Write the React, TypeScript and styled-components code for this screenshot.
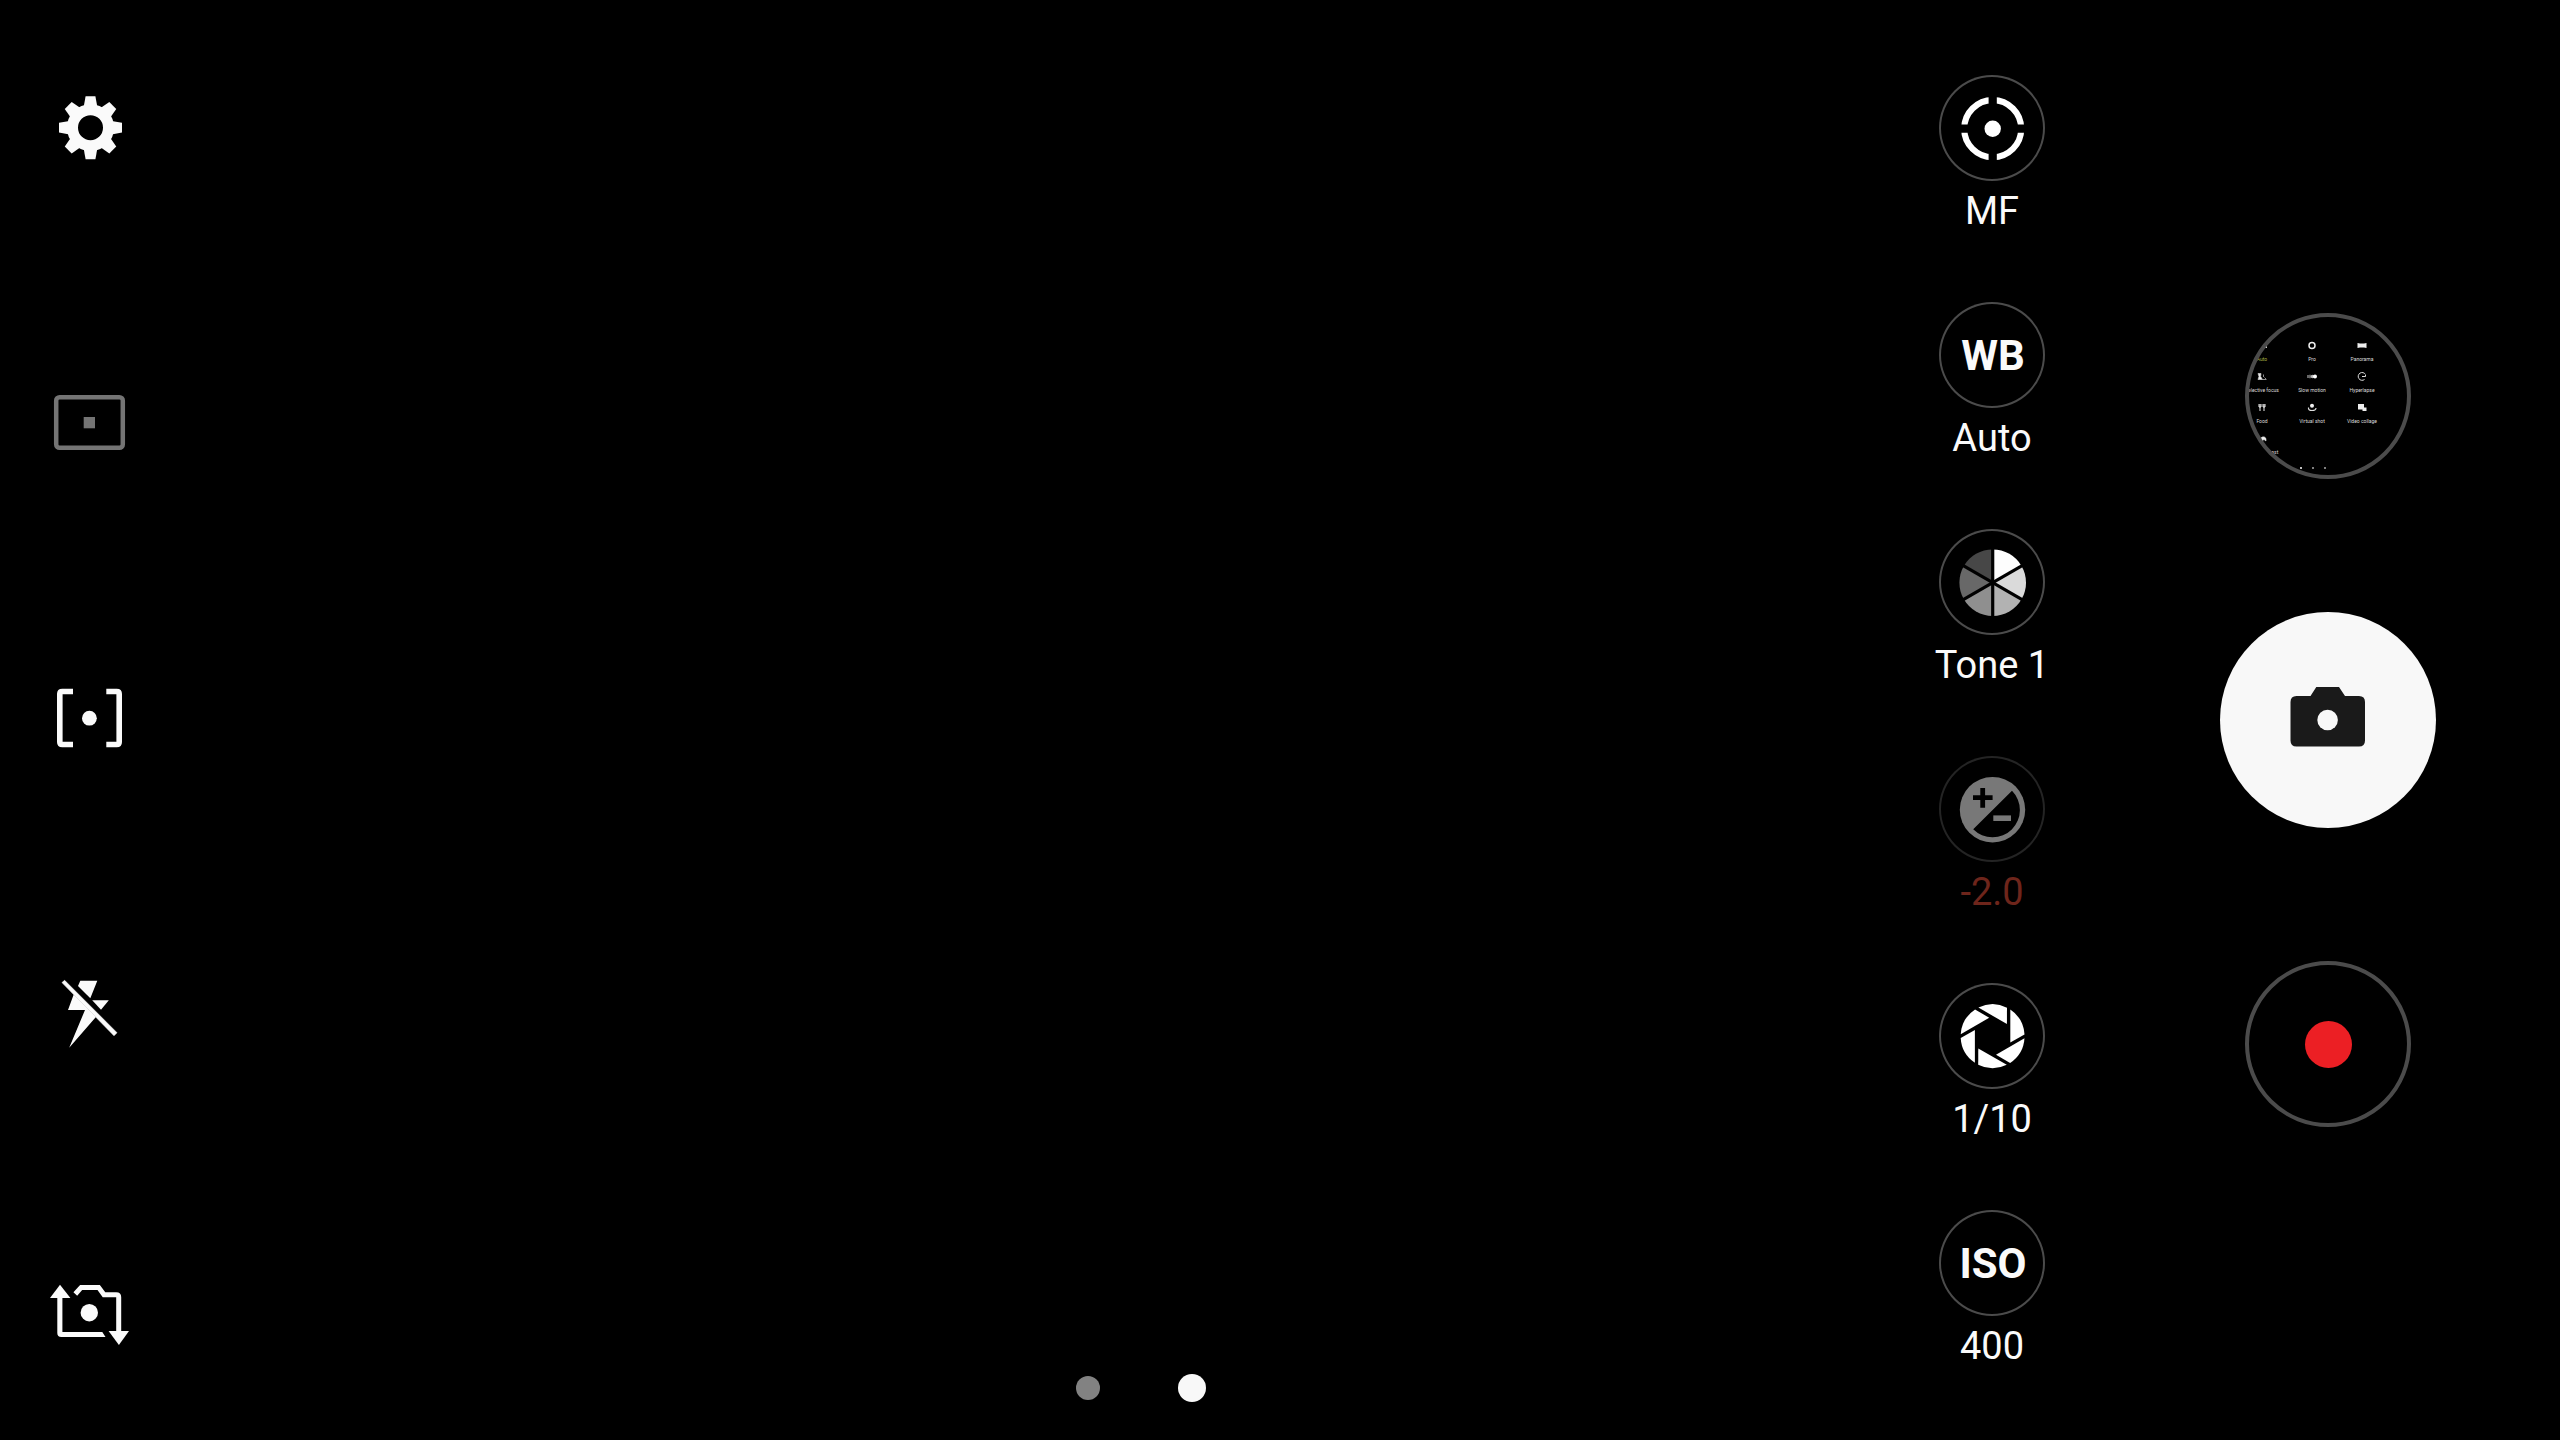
import React from "react";
import styled, { createGlobalStyle } from "styled-components";

const GlobalStyle = createGlobalStyle`
  *, *::before, *::after { box-sizing: border-box; }
  body { margin: 0; background: #000; }
  button { padding: 0; border: 0; background: none; color: inherit; font: inherit; cursor: pointer; }
  svg { display: block; }
`;

const Screen = styled.main`
  display: grid;
  grid-template-columns: 363px 1fr 146px 371px;
  min-height: 100vh;
  padding-right: 124px;
  overflow: hidden;
  background: #000;
  color: #fafafa;
  font-family: Roboto, "Liberation Sans", sans-serif;
`;

const SettingsRail = styled.nav`
  display: flex;
  flex-direction: column;
  align-items: flex-start;
  gap: 199px;
  padding: 80px 42px 0;
`;

const RailButton = styled.button`
  width: 96px;
  height: 96px;
`;

const Viewfinder = styled.section`
  display: flex;
  align-items: flex-end;
  justify-content: center;
  padding-bottom: 38px;
`;

const Pager = styled.div`
  display: flex;
  align-items: center;
  gap: 78px;
`;

const PageDot = styled.button<{ $active?: boolean }>`
  width: ${(p) => (p.$active ? 28 : 24)}px;
  height: ${(p) => (p.$active ? 28 : 24)}px;
  border-radius: 50%;
  background: ${(p) => (p.$active ? "#f8f8f8" : "#828282")};
`;

const ProControls = styled.section`
  display: flex;
  flex-direction: column;
  gap: 69px;
  padding-top: 75px;
`;

const ProControl = styled.button<{ $dimmed?: boolean }>`
  display: flex;
  flex-direction: column;
  align-items: center;
  gap: 8px;
  color: ${(p) => (p.$dimmed ? "#6e251b" : "#fafafa")};
`;

const Ring = styled.span<{ $dimmed?: boolean }>`
  display: grid;
  place-items: center;
  width: 106px;
  height: 106px;
  border-radius: 50%;
  box-shadow: inset 0 0 0 2px ${(p) => (p.$dimmed ? "#242424" : "#4b4b4b")};
`;

const RingText = styled.span`
  padding: 2px 0 0 2px;
  font-size: 42px;
  font-weight: 700;
  line-height: 48px;
`;

const ControlValue = styled.span`
  font-size: 38px;
  line-height: 44px;
  white-space: nowrap;
`;

const CaptureColumn = styled.section`
  display: flex;
  flex-direction: column;
  align-items: center;
  justify-content: center;
  gap: 133px;
  padding-left: 155px;
`;

const RoundButton = styled.button`
  display: flex;
  align-items: center;
  justify-content: center;
  width: 166px;
  height: 166px;
  border: 4px solid #4b4b4b;
  border-radius: 50%;
`;

const GalleryButton = styled(RoundButton)`
  flex-direction: column;
  align-items: flex-start;
  justify-content: flex-start;
  gap: 12px;
  overflow: hidden;
  padding-top: 24px;
`;

const ShutterButton = styled.button`
  display: grid;
  place-items: center;
  width: 216px;
  height: 216px;
  border-radius: 50%;
  background: #f8f8f8;
`;

const RecordDot = styled.span`
  width: 47px;
  height: 47px;
  border-radius: 50%;
  background: #ec1f24;
`;

const ModeGrid = styled.span`
  display: grid;
  grid-template-columns: repeat(3, 50px);
  row-gap: 10px;
  margin-left: -12px;
`;

const Mode = styled.span<{ $active?: boolean }>`
  display: flex;
  flex-direction: column;
  align-items: center;
  gap: 6px;
  color: ${(p) => (p.$active ? "#a8b544" : "#dcdcdc")};
  font-size: 5px;
  line-height: 6px;
  white-space: nowrap;
`;

const ModeDots = styled.span`
  display: flex;
  gap: 10px;
  padding-left: 51px;
`;

const ModeDot = styled.span<{ $active?: boolean }>`
  width: 2px;
  height: 2px;
  border-radius: 50%;
  background: ${(p) => (p.$active ? "#fff" : "#aaa")};
`;

const turns = (n: number) => Array.from({ length: n }, (_, i) => (360 / n) * i);

const RailSvg = ({ children }: { children: React.ReactNode }) => (
  <svg width="96" height="96" viewBox="0 0 96 96" fill="none" aria-hidden="true">
    {children}
  </svg>
);

const RingSvg = ({ children }: { children: React.ReactNode }) => (
  <svg width="106" height="106" viewBox="0 0 106 106" fill="none" aria-hidden="true">
    {children}
  </svg>
);

const GearIcon = () => (
  <RailSvg>
    <g transform="translate(48.5 47.7)">
      <circle r="18" stroke="#fafafa" strokeWidth="11" />
      {turns(8).map((a) => (
        <path key={a} d="M-4.9 -31.5H4.9L6.8 -21H-6.8Z" fill="#fafafa" transform={`rotate(${a})`} />
      ))}
    </g>
  </RailSvg>
);

const RatioIcon = () => (
  <RailSvg>
    <rect x="14.2" y="22.2" width="66.6" height="50.6" rx="3.4" stroke="#747474" strokeWidth="4.5" />
    <rect x="41.7" y="42" width="11.3" height="11.3" fill="#747474" />
  </RailSvg>
);

const MeteringIcon = () => (
  <RailSvg>
    <path
      d="M31 21.5H20.3Q17.8 21.5 17.8 24V72Q17.8 74.5 20.3 74.5H31M64.3 21.5H74.7Q77.2 21.5 77.2 24V72Q77.2 74.5 74.7 74.5H64.3"
      stroke="#fafafa"
      strokeWidth="5.6"
    />
    <circle cx="47.4" cy="48.2" r="7.4" fill="#fafafa" />
  </RailSvg>
);

const FlashOffIcon = () => (
  <RailSvg>
    <g fill="#fafafa">
      <path d="M20 17.6L22.6 15.3L75 67.7L72 70.7Z" stroke="#fafafa" strokeWidth="0.6" />
      <path d="M38.3 15.7H55.3L48.3 33.3L36 20.9Z" />
      <path d="M50.2 35.3H66.8L59 44.8Z" />
      <path d="M31.7 29.5L26 45H43L27.2 82.8L53.9 52Z" />
    </g>
  </RailSvg>
);

const SwitchCameraIcon = () => (
  <RailSvg>
    <path d="M18 24.7L8 38.1H28.4Z" fill="#fafafa" />
    <path d="M15.3 37H20.4V72H60.3L63.5 77H19.3Q15.3 77 15.3 73Z" fill="#fafafa" />
    <path d="M33.3 34L39.2 27.4H56.6L62 34.8H74.2Q76.7 34.8 76.7 37.3V72" stroke="#fafafa" strokeWidth="5" />
    <path d="M66.6 71H87L76.9 85Z" fill="#fafafa" />
    <circle cx="47.3" cy="52.7" r="8.7" fill="#fafafa" />
  </RailSvg>
);

const FocusIcon = () => (
  <RingSvg>
    <circle cx="53.7" cy="53.7" r="28.5" stroke="#fff" strokeWidth="6.2" />
    <path d="M53.7 20V38M53.7 70V88M20 53.7H38M70 53.7H88" stroke="#000" strokeWidth="8.2" />
    <circle cx="53.7" cy="53.7" r="8.2" fill="#fff" />
  </RingSvg>
);

const TONES = ["#fdfdfd", "#dadada", "#b2b2b2", "#8f8f8f", "#686868", "#474747"];

const ToneIcon = () => (
  <RingSvg>
    <g transform="translate(53.7 53.7)">
      {TONES.map((tone, i) => (
        <path key={tone} d="M0 0V-33.3A33.3 33.3 0 0 1 28.84 -16.65Z" fill={tone} transform={`rotate(${i * 60})`} />
      ))}
      {turns(6).map((a) => (
        <path key={a} d="M0 0V-35" stroke="#000" strokeWidth="3.2" transform={`rotate(${a})`} />
      ))}
    </g>
  </RingSvg>
);

const ExposureIcon = () => (
  <RingSvg>
    <circle cx="53.5" cy="53.7" r="32.7" fill="#787878" />
    <path d="M34.2 73.2L73 34.8A27.2 27.2 0 0 1 34.2 73.2Z" fill="#000" />
    <path d="M43.7 32V51.7M34 41.7H53.6" stroke="#000" strokeWidth="4.8" />
    <path d="M54.3 62.2H72" stroke="#787878" strokeWidth="5.6" />
  </RingSvg>
);

const ApertureIcon = () => (
  <RingSvg>
    <g transform="translate(53.6 53.2)" fill="#fff">
      {turns(6).map((a) => (
        <path key={a} d="M17.7 -26.6V6.3L31.9 -1.8A32 32 0 0 0 17.7 -26.6Z" transform={`rotate(${a})`} />
      ))}
    </g>
  </RingSvg>
);

const CameraIcon = () => (
  <svg width="76" height="76" viewBox="0 0 76 76" aria-hidden="true">
    <path
      d="M6.5 14H20.5L26.3 5H49L55 14H69Q75 14 75 20V58.5Q75 64.5 69 64.5H6.5Q0.5 64.5 0.5 58.5V20Q0.5 14 6.5 14Z"
      fill="#1a1a1a"
    />
    <circle cx="37.6" cy="38" r="10.3" fill="#f8f8f8" />
  </svg>
);

const MODES: { label: string; art: React.ReactNode }[] = [
  { label: "Auto", art: <path d="M1 7V3H3L4 2H7L8 3H10V7Z" fill="#ccc" /> },
  { label: "Pro", art: <circle cx="5" cy="4.5" r="3" stroke="#eee" strokeWidth="1.5" /> },
  { label: "Panorama", art: <path d="M0.5 2L3 2.5H7L9.5 2V7L7 6.5H3L0.5 7Z" fill="#eee" /> },
  {
    label: "Selective focus",
    art: <path d="M1 1.5H4L3.6 4.5L5.5 7.5H1L2 4.5ZM6.5 2.5V5M7.5 5.5L9.5 7.5M5.5 7.5H9" fill="#eee" stroke="#ccc" strokeWidth="0.7" />,
  },
  {
    label: "Slow motion",
    art: (
      <>
        <path d="M1 3V6M3 2.8V6.2" stroke="#aaa" strokeWidth="1.2" />
        <circle cx="5.5" cy="4.5" r="1.8" fill="#bbb" />
        <circle cx="8" cy="4.5" r="2" fill="#fff" />
      </>
    ),
  },
  { label: "Hyperlapse", art: <path d="M7.5 7.5A3.9 3.9 0 1 1 8.5 2.5M5 4.5H8.5V3" stroke="#ddd" strokeWidth="1" /> },
  { label: "Food", art: <path d="M3 1V8M2 1V4H4V1M7 1V8M6 1V4H8V1" stroke="#eee" strokeWidth="1" /> },
  {
    label: "Virtual shot",
    art: (
      <>
        <circle cx="5" cy="2.8" r="2" fill="#eee" />
        <path d="M1.5 4.5Q1 7.5 5 7.5T9 5" stroke="#ddd" strokeWidth="1.2" />
      </>
    ),
  },
  { label: "Video collage", art: <path d="M1 1H7V4.5H9.5V8H5.5V6.5H1Z" fill="#eee" /> },
  { label: "Live broadcast", art: <path d="M3 6A3.2 3.2 0 0 1 9 4.5V7L7 5.5L5 7Z" fill="#eee" stroke="#ddd" strokeWidth="0.6" /> },
];

const RAIL = [
  { label: "Settings", Icon: GearIcon },
  { label: "Picture size", Icon: RatioIcon },
  { label: "Metering mode", Icon: MeteringIcon },
  { label: "Flash off", Icon: FlashOffIcon },
  { label: "Switch camera", Icon: SwitchCameraIcon },
];

const CONTROLS: { name: string; value: string; face: React.ReactNode; dimmed?: boolean }[] = [
  { name: "Focus", value: "MF", face: <FocusIcon /> },
  { name: "White balance", value: "Auto", face: <RingText>WB</RingText> },
  { name: "Tone", value: "Tone 1", face: <ToneIcon /> },
  { name: "Exposure", value: "-2.0", face: <ExposureIcon />, dimmed: true },
  { name: "Shutter speed", value: "1/10", face: <ApertureIcon /> },
  { name: "Sensitivity", value: "400", face: <RingText>ISO</RingText> },
];

export default function App() {
  return (
    <>
      <GlobalStyle />
      <Screen>
        <SettingsRail>
          {RAIL.map(({ label, Icon }) => (
            <RailButton key={label} type="button" aria-label={label}>
              <Icon />
            </RailButton>
          ))}
        </SettingsRail>

        <Viewfinder>
          <Pager>
            <PageDot type="button" aria-label="Page 1" />
            <PageDot type="button" aria-label="Page 2" $active />
          </Pager>
        </Viewfinder>

        <ProControls>
          {CONTROLS.map(({ name, value, face, dimmed }) => (
            <ProControl key={name} type="button" title={name} $dimmed={dimmed}>
              <Ring $dimmed={dimmed}>{face}</Ring>
              <ControlValue>{value}</ControlValue>
            </ProControl>
          ))}
        </ProControls>

        <CaptureColumn>
          <GalleryButton type="button" aria-label="Gallery">
            <ModeGrid>
              {MODES.map(({ label, art }, i) => (
                <Mode key={label} $active={i === 0}>
                  <svg width="10" height="9" viewBox="0 0 10 9" fill="none" aria-hidden="true">
                    {art}
                  </svg>
                  {label}
                </Mode>
              ))}
            </ModeGrid>
            <ModeDots>
              <ModeDot $active />
              <ModeDot />
              <ModeDot />
            </ModeDots>
          </GalleryButton>
          <ShutterButton type="button" aria-label="Take picture">
            <CameraIcon />
          </ShutterButton>
          <RoundButton type="button" aria-label="Record video">
            <RecordDot />
          </RoundButton>
        </CaptureColumn>
      </Screen>
    </>
  );
}
